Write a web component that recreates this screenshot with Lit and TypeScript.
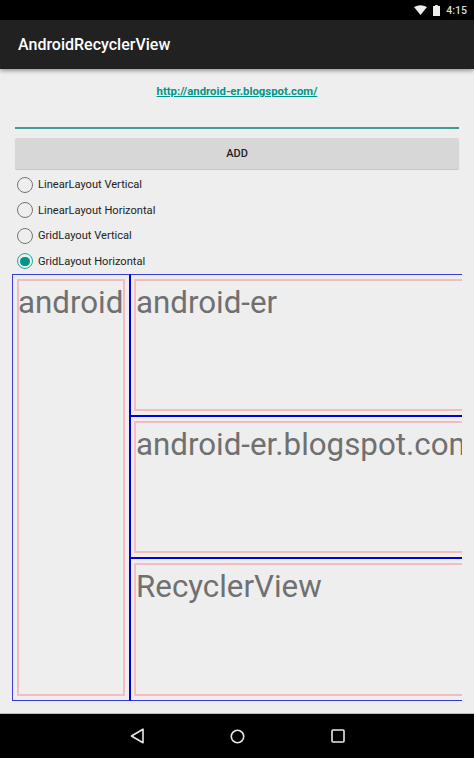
import { LitElement, html, css } from "lit";
import { customElement } from "lit/decorators.js";

@customElement("app-root")
export class AppRoot extends LitElement {
  static styles = css`
    :host { display: flex; flex-direction: column; width: 474px; height: 758px; background: #eeeeee; font-family: Roboto, sans-serif; overflow: hidden; }
    .status { height: 20px; background: #000; display: flex; align-items: center; justify-content: flex-end; padding-right: 7px; gap: 6px; color: #ddd; font-size: 10.5px; font-weight: 500; flex: none; }
    .status svg { display: block; }
    .bar { height: 49px; background: #212121; color: #fff; font-size: 16px; font-weight: 500; display: flex; align-items: center; padding-left: 18px; flex: none; box-shadow: 0 2px 4px rgba(0,0,0,.35); position: relative; }
    .content { flex: 1; min-height: 0; display: flex; flex-direction: column; }
    .link { margin-top: 15px; height: 14px; line-height: 14px; text-align: center; font-size: 11.35px; font-weight: 700; color: #009688; text-decoration: underline; }
    .edit { margin: 29px 15px 0; height: 2px; background: #3f9d94; }
    .btn { margin: 9px 15px 0; height: 31px; background: #d7d7d7; border-radius: 2px; box-shadow: 0 1px 1px rgba(0,0,0,.18); display: flex; align-items: center; justify-content: center; font-size: 11px; font-weight: 500; color: #222; }
    .radios { margin: 3px 0 0 17px; display: flex; flex-direction: column; }
    .radio { height: 25.5px; display: flex; align-items: center; gap: 5px; font-size: 11.1px; color: #222; }
    .dot { width: 16px; height: 16px; box-sizing: border-box; border: 1.7px solid #757575; border-radius: 50%; display: flex; align-items: center; justify-content: center; flex: none; }
    .dot.on { border-color: #26a69a; }
    .dot.on::after { content: ""; width: 9.5px; height: 9.5px; border-radius: 50%; background: #009688; }
    .grid { margin: 0 0 0 12px; width: 450px; height: 427px; flex: none; display: grid; grid-template-columns: 119px 331px; grid-template-rows: 143px 142px 142px; overflow: hidden; }
    .cell { box-sizing: border-box; border: 1px solid #3b3bdc; padding: 4px; min-width: 0; min-height: 0; }
    .first { grid-row: 1 / 4; border-right-width: 2px; border-right-color: #0000d8; }
    .first .inner { text-indent: -1px; }
    .right { border-left: 0; border-right: 0; border-bottom-width: 2px; border-bottom-color: #0000d8; padding-right: 0; padding-left: 3px; }
    .right.end { border-bottom-width: 1px; border-bottom-color: #3b3bdc; }
    .right + .right { border-top: 0; }
    .inner { box-sizing: border-box; height: 100%; border: 2px solid #f4bcbc; font-size: 31.3px; line-height: 43px; color: #707070; white-space: nowrap; overflow: hidden; }
    .right .inner { border-right: 0; }
    .nav { height: 45px; background: #000; border-top: 1px solid #bdbdbd; box-sizing: border-box; display: flex; align-items: center; justify-content: center; gap: 86px; flex: none; }
    .nav svg { display: block; }
  `;

  render() {
    const radios: [string, boolean][] = [
      ["LinearLayout Vertical", false],
      ["LinearLayout Horizontal", false],
      ["GridLayout Vertical", false],
      ["GridLayout Horizontal", true],
    ];
    return html`
      <div class="status">
        <svg width="13" height="10" viewBox="0 0 13 10"><path d="M0 2 Q6.5 -1.5 13 2 L6.5 10 Z" fill="#eee"/></svg>
        <svg width="7" height="11" viewBox="0 0 7 11"><path d="M2.2 0h2.6v1H7v10H0V1h2.2z" fill="#eee"/></svg>
        <span>4:15</span>
      </div>
      <div class="bar">AndroidRecyclerView</div>
      <div class="content">
        <div class="link">http://android-er.blogspot.com/</div>
        <div class="edit"></div>
        <div class="btn">ADD</div>
        <div class="radios">
          ${radios.map(([t, on]) => html`<div class="radio"><span class="dot ${on ? "on" : ""}"></span>${t}</div>`)}
        </div>
        <div class="grid">
          <div class="cell first"><div class="inner">android</div></div>
          <div class="cell right"><div class="inner">android-er</div></div>
          <div class="cell right"><div class="inner">android-er.blogspot.com</div></div>
          <div class="cell right end"><div class="inner">RecyclerView</div></div>
        </div>
      </div>
      <div class="nav">
        <svg width="14" height="16" viewBox="0 0 14 16"><path d="M13 1.2V14.8L1.5 8Z" fill="none" stroke="#e8e8e8" stroke-width="1.6" stroke-linejoin="round"/></svg>
        <svg width="15" height="15" viewBox="0 0 15 15"><circle cx="7.5" cy="7.5" r="6.2" fill="none" stroke="#e8e8e8" stroke-width="1.6"/></svg>
        <svg width="14" height="14" viewBox="0 0 14 14"><rect x="1" y="1" width="12" height="12" rx="1" fill="none" stroke="#e8e8e8" stroke-width="1.6"/></svg>
      </div>
    `;
  }
}
